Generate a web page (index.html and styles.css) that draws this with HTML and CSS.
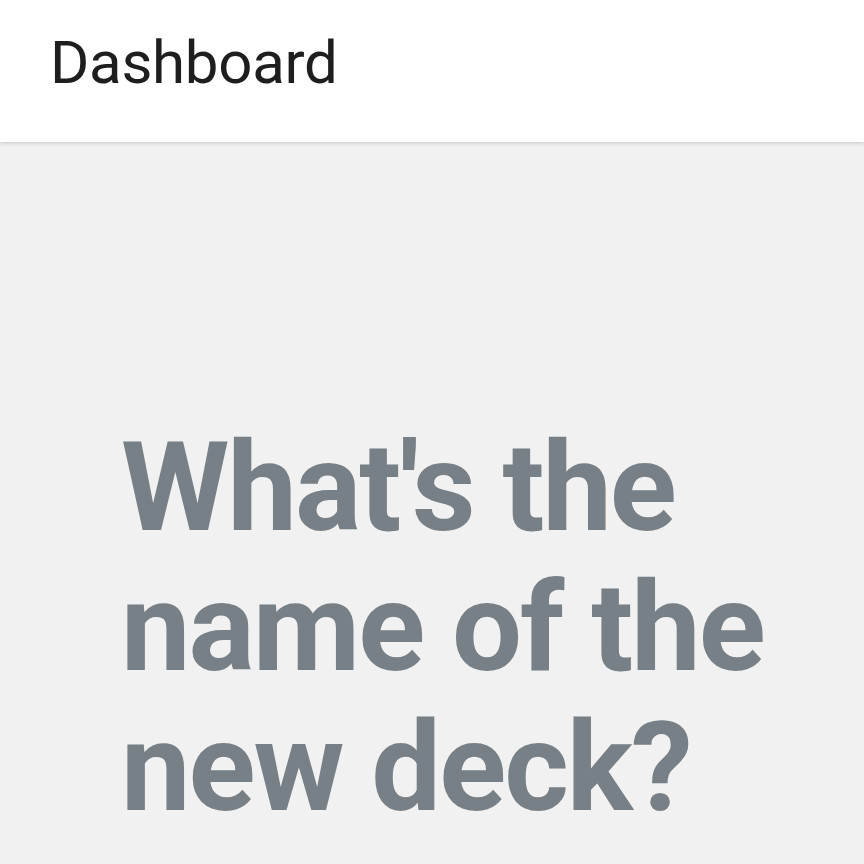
FILE: index.html
```html
<!DOCTYPE html>
<html>
<head>
<meta charset="utf-8">
<link rel="stylesheet" href="styles.css">
</head>
<body>
<header class="topbar">
  <h1 class="title">Dashboard</h1>
</header>
<main class="content">
  <h2 class="question">What's the name of the new deck?</h2>
</main>
</body>
</html>
```
FILE: styles.css
```css
html, body {
  margin: 0;
  padding: 0;
  height: 100%;
}
body {
  background: #f1f1f1;
  font-family: Roboto, "Noto Sans", sans-serif;
  overflow: hidden;
}
.topbar {
  position: relative;
  z-index: 1;
  background: #ffffff;
  height: 142px;
  box-sizing: border-box;
  padding: 27px 0 0 50px;
  box-shadow: 0 1px 4px rgba(0, 0, 0, 0.18);
}
.title {
  margin: 0;
  font-size: 60px;
  font-weight: 400;
  letter-spacing: -0.3px;
  color: #1e1e1e;
  line-height: normal;
}
.content {
  padding: 276px 20px 0 121px;
}
.question {
  margin: 0;
  font-size: 124px;
  font-weight: 700;
  letter-spacing: -2px;
  line-height: 140px;
  color: #778086;
}
```
